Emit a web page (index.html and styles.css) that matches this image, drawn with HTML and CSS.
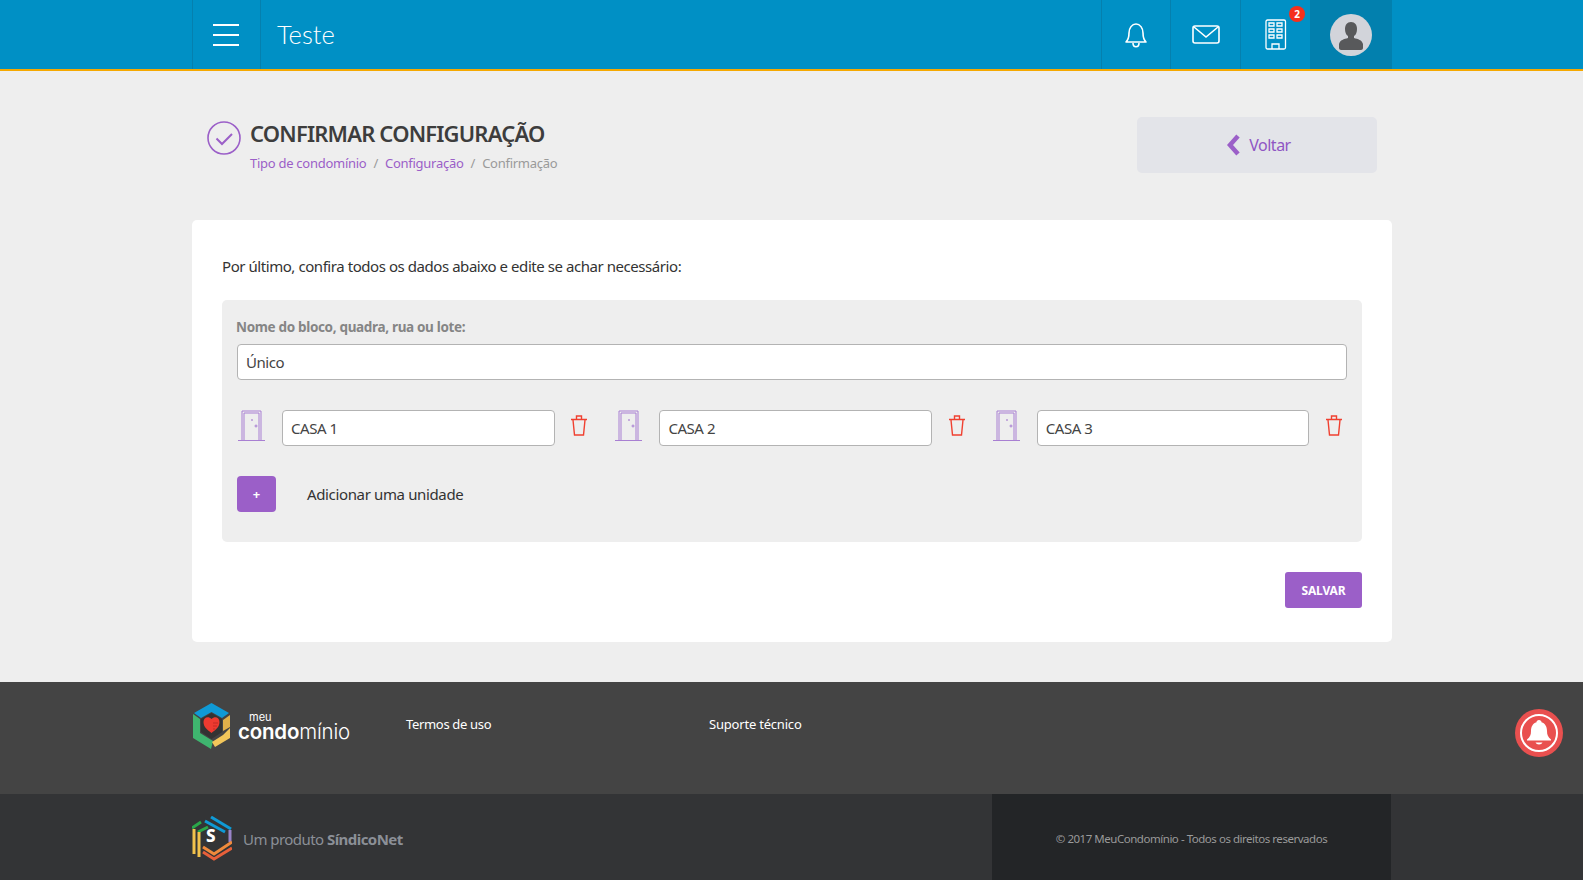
FILE: index.html
```html
<!DOCTYPE html>
<html lang="pt-BR">
<head>
    <meta charset="UTF-8">
    <title>Confirmar configuração</title>
    <link rel="stylesheet" href="styles.css">
</head>
<body>
    <header class="topbar">
        <div class="wrap topbar-in">
            <div class="cell menu-cell">
                <svg width="26" height="22" viewBox="0 0 26 22"><path d="M0 1h26M0 11h26M0 21h26" stroke="#fff" stroke-width="2"/></svg>
            </div>
            <div class="site-name">Teste</div>
            <div class="cell icon-cell">
                <svg width="24" height="26" viewBox="0 0 24 26" fill="none" stroke="#fff" stroke-width="1.6"><path d="M2 20c2-2 3-4 3-9 0-5 3-9 7-9s7 4 7 9c0 5 1 7 3 9z" stroke-linejoin="round"/><path d="M9 21c0 5 6 5 6 0"/></svg>
            </div>
            <div class="cell icon-cell mail-cell">
                <svg width="28" height="20" viewBox="0 0 28 20" fill="none" stroke="#fff" stroke-width="1.6"><rect x="1" y="1" width="26" height="17" rx="2"/><path d="M2 2l12 10L26 2"/></svg>
            </div>
            <div class="cell icon-cell build-cell">
                <svg class="build-icon" width="22" height="31" viewBox="0 0 22 31" fill="none" stroke="#fff" stroke-width="1.3"><rect x="1" y="1" width="19.500" height="29" rx="1.500"/><path d="M4 4h5v3H4zM12 4h5v3h-5zM4 10h5v3H4zM12 10h5v3h-5zM4 16h5v3H4zM12 16h5v3h-5zM7 30v-5h7v5"/></svg>
                <span class="badge">2</span>
            </div>
            <div class="avatar-cell">
                <span class="avatar">
                    <svg width="24" height="30" viewBox="0 0 24 30" fill="#58595b"><path d="M12 1c4 0 6 3 6 7 0 3-1 6-3 7v2c4 1 8 2 9 6v4c0 1-1 2-2 2H2c-1 0-2-1-2-2v-4c1-4 5-5 9-6v-2c-2-1-3-4-3-7 0-4 2-7 6-7z"/></svg>
                </span>
            </div>
        </div>
    </header>

    <main class="wrap">
        <section class="page-head">
            <div class="head-left">
                <svg class="head-icon" width="34" height="34" viewBox="0 0 34 34" fill="none" stroke="#9b5fc8"><circle cx="17" cy="17" r="16" stroke-width="1.600"/><path d="M9.500 17.500l5.500 5.500 10-10" stroke-width="2"/></svg>
                <div>
                    <h1>CONFIRMAR CONFIGURAÇÃO</h1>
                    <div class="crumbs"><a>Tipo de condomínio</a><i>/</i><a>Configuração</a><i>/</i><span>Confirmação</span></div>
                </div>
            </div>
            <button class="back-btn">
                <svg width="15" height="22" viewBox="0 0 15 22"><path d="M12 2L4 11l8 9" fill="none" stroke="#9b5fc8" stroke-width="4.500"/></svg>
                Voltar
            </button>
        </section>

        <section class="card">
            <p class="intro">Por último, confira todos os dados abaixo e edite se achar necessário:</p>
            <div class="panel">
                <label class="block-label">Nome do bloco, quadra, rua ou lote:</label>
                <div class="field field-wide">Único</div>
                <div class="units">
                    <div class="unit">
                        <svg class="door" width="27" height="31" viewBox="0 0 27 31" fill="none" stroke="#a87fd2"><path d="M0 30.500h27M4 30V1h19v29M6 30V3h15v27"/><circle cx="18" cy="16" r="1"/><circle cx="14" cy="10" r=".5"/></svg>
                        <div class="field">CASA 1</div>
                        <svg class="trash" width="16" height="21" viewBox="0 0 16 21" fill="none" stroke="#f04030" stroke-width="1.400"><path d="M0 4.500h16M5.500 4V1h5v3M2 5l1.500 15h9L14 5"/></svg>
                    </div>
                    <div class="unit">
                        <svg class="door" width="27" height="31" viewBox="0 0 27 31" fill="none" stroke="#a87fd2"><path d="M0 30.500h27M4 30V1h19v29M6 30V3h15v27"/><circle cx="18" cy="16" r="1"/><circle cx="14" cy="10" r=".5"/></svg>
                        <div class="field">CASA 2</div>
                        <svg class="trash" width="16" height="21" viewBox="0 0 16 21" fill="none" stroke="#f04030" stroke-width="1.400"><path d="M0 4.500h16M5.500 4V1h5v3M2 5l1.500 15h9L14 5"/></svg>
                    </div>
                    <div class="unit">
                        <svg class="door" width="27" height="31" viewBox="0 0 27 31" fill="none" stroke="#a87fd2"><path d="M0 30.500h27M4 30V1h19v29M6 30V3h15v27"/><circle cx="18" cy="16" r="1"/><circle cx="14" cy="10" r=".5"/></svg>
                        <div class="field">CASA 3</div>
                        <svg class="trash" width="16" height="21" viewBox="0 0 16 21" fill="none" stroke="#f04030" stroke-width="1.400"><path d="M0 4.500h16M5.500 4V1h5v3M2 5l1.500 15h9L14 5"/></svg>
                    </div>
                </div>
                <div class="add-row">
                    <button class="add-btn">+</button>
                    <span>Adicionar uma unidade</span>
                </div>
            </div>
            <div class="save-row"><button class="save-btn">SALVAR</button></div>
        </section>
    </main>

    <footer>
        <div class="foot-top">
            <div class="wrap foot-top-in">
                <div class="logo">
                    <svg width="40" height="46" viewBox="0 0 40 46">
                        <path d="M19.500 0L37 10l-7 5-10.500-6L9 15l-7-5z" fill="#0f9ad6"/>
                        <path d="M1 11l7 5v14l13 8-2 8L1 35z" fill="#3fb56f"/>
                        <path d="M38 12v12l-7 4V17z" fill="#e0b04a"/>
                        <path d="M38 25v10l-15 9-3-5 11-7z" fill="#f2c65a"/>
                        <path d="M19.500 10L30 16v13l-10.500 7L9 29V16z" fill="#333"/>
                        <path d="M19.500 16c3-3 8-2 8 3 0 5-4 8-8 11-4-3-8-6-8-11 0-5 5-6 8-3z" fill="#ee3a30"/>
                        <path d="M21 20h5M21 23h4M21 26h2" stroke="#c22a24" stroke-width="1"/>
                    </svg>
                    <div class="logo-text"><span class="logo-meu">meu</span><span class="logo-name"><b>condo</b>mínio</span></div>
                </div>
                <a class="foot-link first">Termos de uso</a>
                <a class="foot-link second">Suporte técnico</a>
            </div>
        </div>
        <div class="foot-bottom">
            <div class="wrap foot-bottom-in">
                <div class="product">
                    <svg width="40" height="46" viewBox="0 0 40 46" fill="none" stroke-width="3">
                        <path d="M19 1l20 12" stroke="#0f9ad6"/>
                        <path d="M13 5l20 11" stroke="#0f9ad6"/>
                        <path d="M0 12l9-6M6 16l10-5" stroke="#2aa84a"/>
                        <path d="M2 13v25M7 16v25" stroke="#f2c24c"/>
                        <path d="M38 14v12" stroke="#9a84c8"/>
                        <path d="M11 31l11 7 18-12" stroke="#f08a3c"/>
                        <path d="M11 36l11 7 18-11" stroke="#e8603a"/>
                    </svg>
                    <span class="product-s">S</span>
                    <span class="product-text">Um produto <b>SíndicoNet</b></span>
                </div>
                <div class="copyright">© 2017 MeuCondomínio - Todos os direitos reservados</div>
            </div>
        </div>
    </footer>

    <div class="push-bell">
        <span class="push-ring">
            <svg width="28" height="28" viewBox="0 0 28 28" fill="#fff"><path d="M14 1c1.500 0 2.500 1 2.500 2.200C20.500 4.500 22 8 22 12c0 4 1 6 4 8.500v1H2v-1C5 18 6 16 6 12c0-4 1.500-7.500 5.500-8.800C11.500 2 12.500 1 14 1z"/><path d="M10.500 23.500h7c-1 2.500-6 2.500-7 0z"/></svg>
        </span>
    </div>
</body>
</html>
```

FILE: styles.css
```css
* { box-sizing: border-box; }
body { margin: 0; background: #eee; font-family: "Noto Sans", Arial, sans-serif; color: #3d3d3d; font-size: 15px; }
.wrap { width: 1200px; margin-left: 192px; }
a { color: #9b5fc8; }
button { font-family: inherit; border: none; cursor: pointer; }

.topbar { height: 71px; background: #0090c5; border-bottom: 2px solid #f5a800; }
.topbar-in { display: flex; height: 69px; }
.cell { display: flex; align-items: center; justify-content: center; border-left: 1px solid #0580ae; }
.menu-cell { width: 68px; padding: 1px 2px 0 0; }
.site-name { flex: 1; border-left: 1px solid #0580ae; padding-left: 16px; font-family: Lato, sans-serif; font-weight: 300; font-size: 25.500px; line-height: 69px; color: #fff; }
.icon-cell { width: 69px; position: relative; }
.mail-cell { width: 70px; }
.build-cell { width: 70px; }
.build-icon { margin-left: 1px; }
.badge { position: absolute; top: 6px; right: 5px; width: 16px; height: 16px; border-radius: 50%; background: #f5301c; color: #fff; font-size: 10px; font-weight: 700; line-height: 16px; text-align: center; }
.avatar-cell { width: 82px; background: #0280ae; display: flex; align-items: center; justify-content: center; }
.avatar { width: 42px; height: 42px; border-radius: 50%; background: #d2d4da; display: flex; align-items: center; justify-content: center; padding-top: 2px; }

.page-head { height: 149px; display: flex; justify-content: space-between; align-items: flex-start; padding: 46px 15px 0; }
.head-left { display: flex; gap: 9px; padding-top: 1px; }
.head-icon { margin-top: 3px; }
h1 { margin: 0; font-family: "Noto Sans", sans-serif; font-size: 22px; line-height: 30px; font-weight: 600; letter-spacing: -0.82px; color: #3d3d3d; }
.crumbs { margin-top: 6px; font-size: 13px; line-height: 18px; letter-spacing: -0.27px; color: #9a9a9a; }
.crumbs i { font-style: normal; margin: 0 7px; }
.back-btn { width: 240px; height: 56px; background: #e3e4e9; border-radius: 5px; color: #8f56c4; font-size: 16px; letter-spacing: -0.5px; display: flex; align-items: center; justify-content: center; gap: 8px; padding-left: 9px; }

.card { height: 422px; background: #fff; border-radius: 5px; padding: 35px 30px 0; }
.intro { margin: 0 0 23px; font-size: 15px; line-height: 22px; letter-spacing: -0.44px; color: #333; }
.panel { height: 242px; background: #eee; border-radius: 5px; padding: 16px 15px 0; }
.block-label { display: block; font-weight: 700; font-size: 13.500px; line-height: 22px; letter-spacing: -0.33px; color: #858585; margin-bottom: 6px; margin-left: -1px; }
.field { flex: 1; height: 36px; background: #fff; border: 1px solid #b3b3b3; border-radius: 4px; padding: 0 8px; font-size: 15px; line-height: 34px; letter-spacing: -0.45px; color: #444; }
.units { display: grid; grid-template-columns: repeat(3, 354.400px); gap: 23px; margin-top: 30px; }
.unit { display: flex; align-items: center; }
.door { flex: none; margin-right: 17px; margin-left: 1px; margin-top: -6px; }
.trash { flex: none; margin-left: 16.500px; margin-right: 4.200px; margin-top: -6px; }
.add-row { display: flex; align-items: center; gap: 31px; margin-top: 30px; letter-spacing: -0.36px; color: #333; }
.add-btn { width: 39px; height: 36px; border-radius: 4px; background: #9b5fc8; color: #fff; font-size: 13px; font-weight: 700; }
.save-row { display: flex; justify-content: flex-end; margin-top: 30px; }
.save-btn { width: 77px; height: 36px; border-radius: 3px; background: #9b5fc8; color: #fff; font-size: 12px; font-weight: 700; letter-spacing: -0.15px; }

footer { margin-top: 40px; }
.foot-top { height: 112px; background: #444; }
.foot-top-in { display: flex; align-items: flex-start; padding-top: 21px; }
.logo { display: flex; width: 214px; gap: 6px; }
.logo-text { display: flex; flex-direction: column; color: #fff; padding-top: 9px; }
.logo-meu { font-family: Inter, sans-serif; font-size: 11px; line-height: 11px; margin-left: 11px; }
.logo-name { font-family: Inter, sans-serif; font-size: 20.500px; line-height: 17px; font-weight: 300; letter-spacing: -0.2px; }
.logo-name b { font-weight: 600; }
.foot-link { color: #fff; font-size: 13px; line-height: 18px; letter-spacing: -0.33px; margin-top: 12px; }
.first { width: 303px; }
.second { letter-spacing: -0.2px; }
.foot-bottom { height: 86px; background: #333436; }
.foot-bottom-in { display: flex; height: 86px; justify-content: space-between; }
.product { display: flex; align-items: center; gap: 11px; position: relative; padding-top: 3px; }
.product-s { position: absolute; left: 14px; top: 30px; font-size: 17px; font-weight: 800; color: #fff; line-height: 24px; }
.product-text { color: #8b8f97; font-size: 15px; letter-spacing: -0.55px; }
.copyright { width: 399px; margin-right: 1px; background: #232527; color: #9a9a9a; font-size: 11.500px; letter-spacing: -0.47px; text-align: center; line-height: 90px; }

.push-bell { position: absolute; left: 1515px; top: 709px; width: 48px; height: 48px; border-radius: 50%; background: #e9504f; display: flex; align-items: center; justify-content: center; }
.push-ring { width: 38px; height: 38px; border-radius: 50%; border: 2px solid #fff; display: flex; align-items: center; justify-content: center; }
```
